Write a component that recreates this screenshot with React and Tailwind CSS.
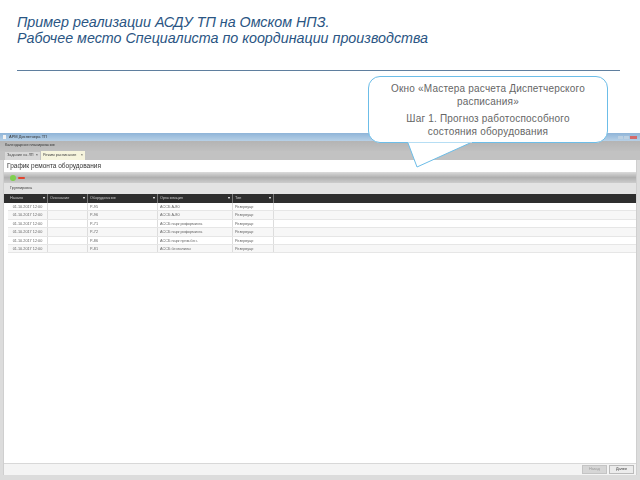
const rows = [
  ["01.10.2017 12:00", "Р-95", "АССБ А-80"],
  ["01.10.2017 12:00", "Р-96", "АССБ А-80"],
  ["01.10.2017 12:00", "Р-71", "АССБ парк риформинга"],
  ["01.10.2017 12:00", "Р-72", "АССБ парк риформинга"],
  ["01.10.2017 12:00", "Р-86", "АССБ парк прям.бен."],
  ["01.10.2017 12:00", "Р-81", "АССБ бензолилы"],
];
const cols = ["w-[40px]", "w-[40px]", "w-[70px]", "w-[75px]", "w-[41px]"];
const heads = ["Начало", "Окончание", "Оборудование", "Организация", "Тип"];

export default function App() {
  return (
    <div className="relative w-[640px] h-[480px] overflow-hidden bg-white font-['Liberation_Sans',sans-serif]">
      <header className="px-[17px] pt-[14px]">
        <h1 className="text-[14.3px] leading-[16px] italic font-normal text-[#2a5583]">
          Пример реализации АСДУ ТП на Омском НПЗ.<br />Рабочее место Специалиста по координации производства
        </h1>
        <div className="mt-[24px] h-[1px] w-[603px] bg-[#5f7f9f]" />
      </header>

      <main className="mt-[62px] h-[347px] flex flex-col bg-[#dcdcdc] text-[3.8px] text-[#555] blur-[0.5px]">
        <div className="h-[8px] shrink-0 flex items-center justify-between px-[3px] bg-gradient-to-b from-[#8fb4d8] to-[#b7d0e6]">
          <div className="flex items-center gap-[3px]">
            <span className="w-[3px] h-[4px] bg-[#f2f2f2]" />
            <span className="text-[#333] text-[4px]">АРМ Диспетчера ТП</span>
          </div>
          <div className="flex gap-[1px]">
            <span className="w-[5px] h-[3px] bg-[#bcd0e2]" />
            <span className="w-[5px] h-[3px] bg-[#bcd0e2]" />
            <span className="w-[7px] h-[3px] bg-[#d46a6a]" />
          </div>
        </div>
        <div className="h-[10px] shrink-0 flex items-center px-[5px] bg-gradient-to-b from-[#b4b4b4] to-[#c0c0c0] text-[#333]">
          Календарное планирование
        </div>
        <div className="h-[9px] shrink-0 flex items-end gap-[1px] pl-[5px] bg-[#c2c2c2]">
          <div className="h-[8px] w-[35px] flex items-center justify-between px-[2px] bg-[#d8d8d8] text-[#444]">
            <span>Задание на ЛП</span>
            <span className="text-[#222]">×</span>
          </div>
          <div className="h-[9px] w-[44px] flex items-center justify-between px-[2px] bg-[#f6f4dd] text-[#444]">
            <span>Режим расписания</span>
            <span className="text-[#222]">×</span>
          </div>
        </div>
        <div className="flex-1 ml-[3px] mr-[3px] mb-[5px] flex flex-col bg-white border-x border-[#cfcfcf]">
          <div className="h-[12px] shrink-0 flex items-center pl-[3px] text-[6.5px] text-[#333]">График ремонта оборудования</div>
          <div className="h-[11px] shrink-0 flex items-center gap-[2px] pl-[6px] bg-gradient-to-b from-[#dcdcdc] via-[#b0b0b0] to-[#cccccc]">
            <span className="w-[6px] h-[6px] rounded-full bg-[#7fd04f]" />
            <span className="w-[7px] h-[2px] rounded-full bg-[#e2452f]" />
          </div>
          <div className="h-[11px] shrink-0 flex items-center pl-[6px] bg-[#e3e3e3] text-[#444]">Группировка</div>
          <div className="h-[9px] shrink-0 flex items-center bg-[#2e2e2e] text-[#c9c9c9] pl-[4px]">
            {heads.map((h, i) => (
              <div key={h} className={`${cols[i]} h-full flex items-center justify-between px-[2px] border-r border-[#777]`}>
                <span>{h}</span>
                <span className="text-white">▾</span>
              </div>
            ))}
          </div>
          <div className="flex-1 pl-[4px] text-[#666]">
            {rows.map((r, i) => (
              <div key={i} className={`h-[8.4px] flex items-center border-b border-[#e6e6e6] ${i % 2 ? "bg-[#f7f7f7]" : "bg-white"}`}>
                <div className={`${cols[0]} h-full text-center border-r border-[#ddd] leading-[8px]`}>{r[0]}</div>
                <div className={`${cols[1]} h-full border-r border-[#ddd]`} />
                <div className={`${cols[2]} h-full pl-[2px] border-r border-[#ddd] leading-[8px]`}>{r[1]}</div>
                <div className={`${cols[3]} h-full pl-[2px] border-r border-[#ddd] leading-[8px]`}>{r[2]}</div>
                <div className={`${cols[4]} h-full pl-[2px] border-r border-[#ddd] leading-[8px]`}>Резервуар</div>
              </div>
            ))}
          </div>
          <div className="h-[12px] shrink-0 flex items-center justify-end gap-[2px] pr-[2px] border-t border-[#d8d8d8] bg-[#f4f4f4]">
            <div className="w-[25px] h-[9px] flex items-center justify-center bg-[#d6d6d6] border border-[#c4c4c4] text-[#999]">Назад</div>
            <div className="w-[25px] h-[9px] flex items-center justify-center bg-[#ececec] border border-[#bbb] text-[#333]">Далее</div>
          </div>
        </div>
      </main>

      <div className="absolute left-[368px] top-[76px] w-[240px] h-[67px] z-10 rounded-[12px] border border-[#6cbde8] bg-white flex flex-col items-center justify-center text-center text-[10px] tracking-[0.2px] leading-[13px] text-[#666]">
        <p className="mb-[4px]">Окно «Мастера расчета Диспетчерского<br />расписания»</p>
        <p>Шаг 1. Прогноз работоспособного<br />состояния оборудования</p>
      </div>
      <svg className="absolute left-[405px] top-[138px] z-20" width="70" height="32" viewBox="0 0 70 32">
        <path d="M3 5 L12 29 L65 5" fill="#fff" stroke="#6cbde8" strokeWidth="1" />
        <path d="M2 2 H67 V4.5 H3 Z" fill="#fff" />
      </svg>
    </div>
  );
}
